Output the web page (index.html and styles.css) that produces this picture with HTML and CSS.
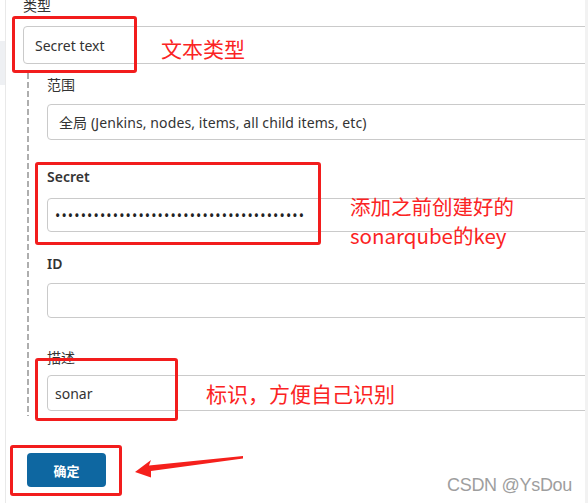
FILE: index.html
```html
<!DOCTYPE html>
<html lang="zh-CN">
<head>
<meta charset="utf-8">
<title>Credentials</title>
<link rel="stylesheet" href="styles.css">
</head>
<body>
<div class="page">
  <div class="rail"><div class="rail-block"></div></div>
  <div class="main">
    <div class="label cjk">类型</div>
    <select class="control select type-select"><option>Secret text</option></select>
    <div class="nested">
      <div class="dash"></div>
      <div class="nested-body">
        <div class="label cjk">范围</div>
        <select class="control select scope-select"><option>全局 (Jenkins, nodes, items, all child items, etc)</option></select>

        <div class="field f-secret">
          <div class="label latin">Secret</div>
          <input class="control input secret-input" type="password" value="sonarqubetokenvalue00000000000000000000" readonly>
        </div>

        <div class="field f-id">
          <div class="label latin">ID</div>
          <input class="control input id-input" type="text" value="" readonly>
        </div>

        <div class="field f-desc">
          <div class="label cjk">描述</div>
          <input class="control input desc-input" type="text" value="sonar" readonly>
        </div>
      </div>
    </div>
    <button class="btn-ok" type="button">确定</button>
  </div>
</div>

<div class="scroll-edge"></div>

<div class="mark mark-type"></div>
<div class="mark mark-secret"></div>
<div class="mark mark-desc"></div>
<div class="mark mark-ok"></div>

<div class="note note-type">文本类型</div>
<div class="note note-secret">添加之前创建好的<br>sonarqube的key</div>
<div class="note note-desc">标识，方便自己识别</div>

<svg class="arrow" width="120" height="30" viewBox="130 450 120 30" xmlns="http://www.w3.org/2000/svg">
  <polygon points="135,472 151,460 149,465.5 243,456 243,458.5 151,471 151,477.5" fill="#f5201c"/>
</svg>

<div class="watermark">CSDN @YsDou</div>
</body>
</html>
```

FILE: styles.css
```css
html, body {
  margin: 0;
  padding: 0;
  background: #ffffff;
  overflow: hidden;
}

body {
  width: 588px;
  height: 503px;
  position: relative;
  font-family: "Noto Sans", "Noto Sans CJK SC", sans-serif;
  color: #333333;
}

.page {
  display: flex;
  width: 610px;
  height: 503px;
}

.rail {
  width: 5px;
  flex: none;
  border-right: 1px solid #e9e9e9;
}

.rail-block {
  margin-top: 41px;
  height: 44px;
  background: #eef0f3;
}

.main {
  flex: 1;
  padding-left: 17px;
  margin-top: -5px;
}

.label {
  font-size: 14px;
  line-height: 20px;
  height: 20px;
  color: #333333;
}

.label.cjk {
  font-family: "Noto Sans CJK SC", sans-serif;
  font-weight: 400;
}

.label.latin {
  font-weight: 600;
}

.control {
  display: block;
  box-sizing: border-box;
  width: 100%;
  margin: 0;
  border: 1px solid #cacaca;
  border-radius: 4px;
  background: #ffffff;
  font-family: "Noto Sans", "Noto Sans CJK SC", sans-serif;
  font-size: 14px;
  color: #333333;
  outline: none;
}

.select {
  -webkit-appearance: none;
  appearance: none;
  padding: 0 11px;
}

.input {
  padding: 0 7px;
}

.type-select {
  margin-top: 11px;
  height: 38px;
}

.nested {
  display: flex;
  margin-top: 9px;
}

.dash {
  width: 2px;
  flex: none;
  margin-left: 4px;
  background: repeating-linear-gradient(to bottom, #aeaeae 0, #aeaeae 6px, transparent 6px, transparent 9px);
}

.nested-body {
  flex: 1;
  padding-left: 18px;
  padding-top: 1px;
  padding-bottom: 5px;
}

.scope-select {
  margin-top: 10px;
  height: 36px;
  letter-spacing: 0.1px;
}

.f-secret { margin-top: 27px; }
.f-id { margin-top: 22px; }
.f-desc { margin-top: 29px; }

.secret-input {
  margin-top: 11px;
  height: 34px;
  padding-left: 7px;
  letter-spacing: 1.15px;
  font-size: 14px;
  color: #222222;
}

.id-input {
  margin-top: 9px;
  height: 35px;
}

.desc-input {
  margin-top: 8px;
  height: 36px;
}

.btn-ok {
  display: block;
  margin: 37px 0 0 4px;
  width: 79px;
  height: 34px;
  border: none;
  border-radius: 4px;
  background: #0e67a1;
  color: #ffffff;
  font-family: "Noto Sans CJK SC", sans-serif;
  font-weight: 700;
  font-size: 13px;
  padding: 0;
}

.scroll-edge {
  position: absolute;
  top: 0;
  right: 0;
  width: 3px;
  height: 503px;
  background: #f2f2f2;
}

.mark {
  position: absolute;
  box-sizing: border-box;
  border: 3px solid #f21d1d;
  border-radius: 3px;
}

.mark-type { left: 12px; top: 16px; width: 125px; height: 57px; }
.mark-secret { left: 35px; top: 162px; width: 286px; height: 83px; }
.mark-desc { left: 35px; top: 358px; width: 143px; height: 63px; }
.mark-ok { left: 10px; top: 445px; width: 112px; height: 51px; }

.note {
  position: absolute;
  font-family: "Noto Sans CJK SC", sans-serif;
  font-size: 21px;
  color: #fb2323;
  white-space: nowrap;
}

.note-type { left: 161px; top: 33px; line-height: 30px; }
.note-secret { left: 350px; top: 192px; line-height: 29px; font-size: 20.5px; }
.note-desc { left: 206px; top: 378px; line-height: 30px; }

.arrow {
  position: absolute;
  left: 130px;
  top: 450px;
}

.watermark {
  position: absolute;
  left: 447px;
  top: 474px;
  font-family: "Liberation Sans", sans-serif;
  font-size: 18px;
  line-height: 22px;
  color: #9e9e9e;
  letter-spacing: -0.3px;
}
```
